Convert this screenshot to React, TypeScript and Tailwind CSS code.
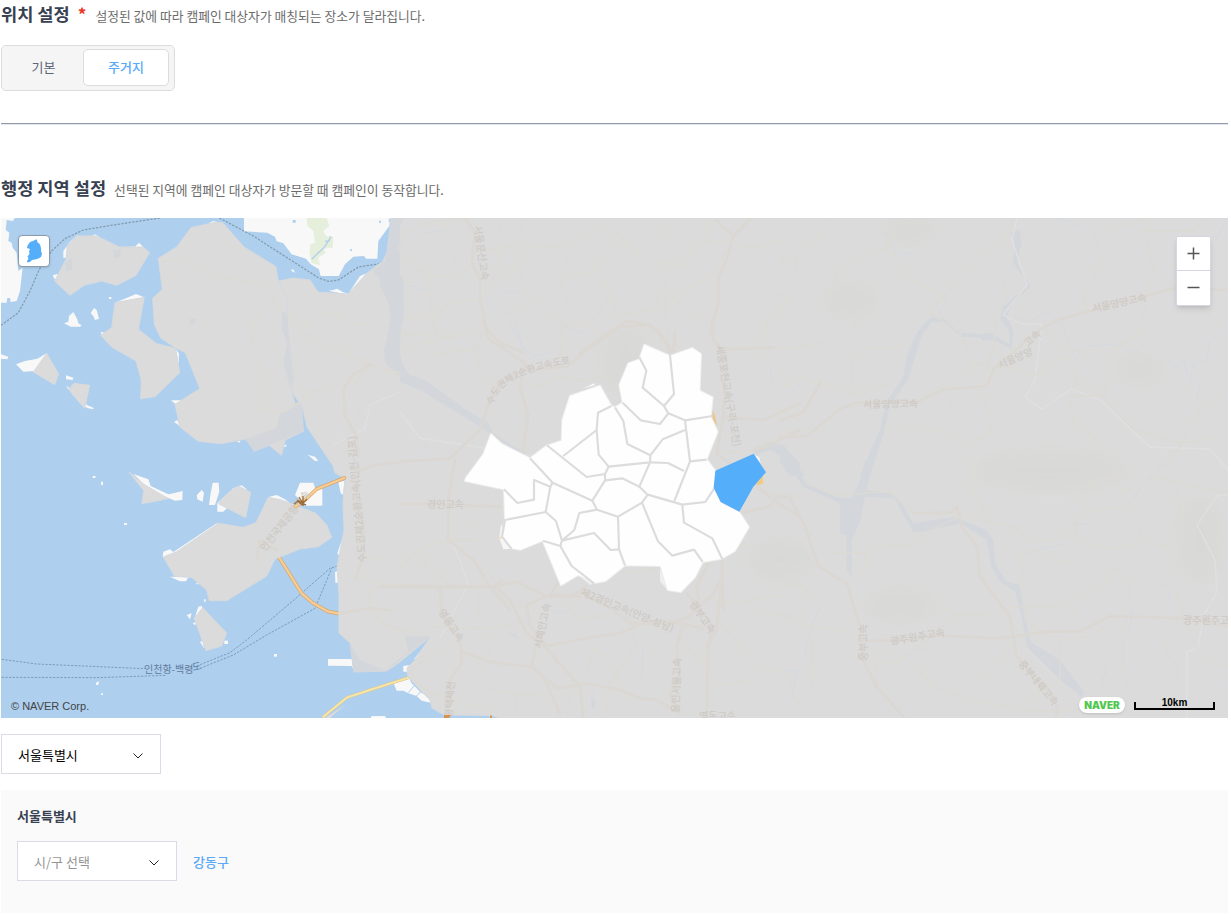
import type { ReactNode } from "react";

const FONT = "font-['Noto_Sans_CJK_KR','Noto_Sans',sans-serif]";

/** A map tile drawn at triple density, placed at x, y of the map. */
function Tile({ x, y, children }: { x: number; y: number; children: ReactNode }) {
  return <g transform={`translate(${x} ${y}) scale(0.33333)`}>{children}</g>;
}

function Lines({ d, color, width }: { d: string[]; color: string; width: number }) {
  return (
    <g fill="none" stroke={color} strokeWidth={width} strokeLinejoin="round" strokeLinecap="round">
      {d.map((p) => (
        <path key={p} d={p} />
      ))}
    </g>
  );
}

const MAINLAND =
  "M390 218L392 226 391 243 383 261 367 273 348 294 318 292 310 280 293 278 279 281 287 297 288 305 282 331 288 340 285 363 293 376 292 393 302 406 307 427 333 466 335 473 345 478 343 503 344 530 337 567 339 593 339 633 350 643 354 672 387 671 400 662 430 637 415 660 407 668 408 677 430 700 432 708 444 715 492 715.500 500 718H1228V218Z";

const ISLANDS_NORTH = [
  "232,60 290,60 358,93 430,93 449,110 408,178 350,208 306,195 252,208 210,238 164,195 198,130 202,88",
  "475,127 530,93 573,35 640,20 668,20 732,93 828,152 835,197 862,242 862,268 847,345 865,372 855,440 880,480 875,530 912,645 856,672 844,718 808,688 762,706 745,667 665,683 595,676 540,633 525,565 600,518 556,410 526,395 482,366 463,325 458,247 487,220",
  "345,260 433,244 415,340 470,383 527,397 539,470 465,542 422,548 424,492 408,435 335,393 302,358 335,335",
  "140,412 176,474 164,506 100,468",
  "222,502 269,508 254,577 206,520",
];

const ISLANDS_SOUTH = [
  "387,36 430,72 505,116 426,131 431,92",
  "715,78 752,97 737,173 655,131 685,98",
  "805,112 845,120 948,160 980,195 995,232 955,260 900,267 825,297 800,348 680,422 628,422 620,390 575,352 524,349 490,291 530,275 655,190 730,202 768,188",
  "608,443 680,519 665,558 618,572 583,475",
];

const WHITE_NORTH = [
  "3,6 45,6 38,15 20,12 17,42 28,50 25,75 35,80 38,95 50,110 55,165 68,155 60,225 50,255 32,258 30,246 22,246 20,260 3,260",
  "732,6 1170,6 1168,30 1135,75 1132,128 1098,128 1092,120 1060,122 1035,145 1016,180 962,180 957,160 932,145 918,128 875,115 850,82 830,76 825,62 802,50 732,46",
  "192,322 205,317 207,300 220,288 232,310 235,322 245,328 240,332 212,332",
  "272,292 282,276 290,282 297,308 285,312 280,300",
  "198,478 220,485 218,492 198,490",
  "48,445 75,435 112,428 142,410 108,465 70,467",
  "3,415 25,422 22,430 3,428",
  "198,508 210,518 262,568 280,575 280,580 265,577 245,568 205,520",
  "513,553 542,553 535,562 525,563",
  "522,618 532,612 540,630",
  "358,93 405,92 417,80 430,93",
  "345,260 408,234 433,244",
  "202,85 232,58 240,62",
  "275,60 285,55 300,64",
  "158,178 172,174 178,185 164,190",
  "528,400 537,412 536,440 530,438",
  "985,224 1000,222 1012,218 1028,228 1045,233 1080,180 1100,172 1050,238",
  "923,716 945,722 953,732 945,735",
  "190,105 200,90 203,125 190,125",
  "872,162 880,160 885,170 878,167",
  "302,348 318,350 306,360",
  "327,243 334,243 334,249 327,249",
  "850,688 860,686 857,694",
  "710,675 722,675 718,680",
  "625,22 640,15 660,20",
  "852,244 860,240 860,265",
  "422,485 426,485 425,505",
];

const WHITE_SOUTH = [
  "400,42 445,58 452,78 505,103 520,100 548,93 547,120 525,122 505,114 450,90",
  "278,48 287,48 286,54 278,54",
  "303,65 309,65 309,75 303,75",
  "372,189 381,189 381,195 372,195",
  "590,106 605,90 612,98 608,125 592,118",
  "638,68 656,68 658,95 645,135 627,135 632,100",
  "652,130 700,85 725,76 740,88 670,155 652,155",
  "885,105 900,68 940,68 945,84 967,85 967,137 920,137",
  "803,112 830,105 855,118 870,130",
  "488,290 490,275 510,268 520,276 650,190 655,196 500,300",
  "510,350 565,352 558,364 540,364",
  "588,370 594,368 594,374",
  "612,418 617,418 617,425 612,425",
  "595,440 606,438 608,450 590,470 582,480",
  "560,465 575,460 570,478",
  "578,490 590,485 585,496",
  "600,545 608,542 612,565",
  "673,542 684,542 684,552 673,552",
  "822,582 831,582 831,590 822,590",
  "984,597 1055,597 1060,628 1055,618 984,617",
  "288,668 297,663 295,675 288,675",
  "303,700 309,700 309,705 303,705",
  "1015,66 1033,62 1030,105 1022,100",
  "1012,280 1022,250 1028,230 1020,290",
  "1005,336 1013,332 1014,368 1006,368",
  "1115,768 1155,768 1160,778 1110,778",
  "943,0 955,0 950,4",
];

const SEOUL =
  "733,74 810,108 877,84 903,102 899,212 938,232 932,290 953,335 920,418 946,452 941,505 962,548 1018,577 1047,621 1005,693 965,716 908,726 885,772 842,816 803,810 782,738 675,736 617,783 583,789 535,765 483,796 428,662 362,689 335,685 305,650 315,600 312,508 195,483 197,475 250,403 273,342 305,372 390,415 440,377 485,362 487,300 510,228 600,197 634,258 645,262 668,248 658,195 685,130 718,118";

const DISTRICTS = [
  "M718 112L739 152 728 203 792 258 822 222 810 105",
  "M792 258L805 280 855 301 938 288",
  "M668 248L722 301 780 312 805 280",
  "M645 262L670 303 682 372 751 406 788 358 855 330",
  "M634 258L594 278 590 330 596 404 626 440 750 427 751 406",
  "M440 375L560 471 615 462 626 440",
  "M590 330L490 408",
  "M855 301L870 424 920 419",
  "M870 424L823 543",
  "M750 427L804 429 852 453",
  "M750 427L718 500 743 524 847 554 916 546 943 505",
  "M718 500L667 475 615 481 615 462",
  "M615 481L577 542 591 569 654 590 726 548 743 524",
  "M390 415L458 488 577 542",
  "M312 508L352 549 402 539 402 480 451 500 458 488",
  "M451 500L437 576 315 600 306 650 335 687",
  "M437 576L468 603 486 662 481 678 428 662",
  "M591 569L538 579 523 630 486 662 582 639 632 690 657 688",
  "M654 590L657 688 675 736",
  "M481 678L515 738 583 791",
  "M726 548L774 664 817 707 882 689 908 726",
  "M847 554L852 608 937 655 967 718",
];

const WATER_BLOBS: { x: number; y: number; shapes: string[] }[] = [
  {
    x: 0,
    y: 216,
    shapes: [
      "1172,10 1200,6 1200,480 1155,440 1152,400 1160,370 1172,300 1160,220 1120,165 1155,135",
      "735,670 830,635 840,590 905,560 912,645 850,670 808,688 762,706",
      "845,290 862,285 868,372 880,480 872,520 850,440 862,380 845,340",
      "195,140 215,125 218,160 200,165",
      "340,105 365,98 358,125 342,125",
      "566,310 590,308 576,330",
    ],
  },
  {
    x: 380,
    y: 216,
    shapes: ["38,6 70,10 55,40 48,160 70,190 72,300 62,345 60,420 18,420 30,330 30,270 0,210 0,145 25,130"],
  },
  {
    x: 400,
    y: 320,
    shapes: [
      "0,100 0,185 60,210 240,320 350,395 390,415 400,410 350,385 280,340 265,310 200,270 75,180 30,165 8,135",
      "1060,385 1100,365 1150,375 1200,430 1200,480 1150,415 1110,390 1065,405",
    ],
  },
  {
    x: 780,
    y: 216,
    shapes: [
      "240,780 300,640 318,560 370,480 380,420 410,350 450,305 490,305 540,350 600,355 630,350 690,385 685,340 660,310 670,270 745,210 700,140 705,80 690,50 720,40 725,80 712,140 752,212 700,260 680,300 700,345 695,400 640,372 610,375 600,365 545,362 490,318 455,318 425,360 385,490 330,570 312,650 270,780",
      "0,690 30,720 75,780 30,780 0,740",
    ],
  },
  {
    x: 780,
    y: 460,
    shapes: [
      "12,0 45,0 75,65 165,110 215,115 240,60 255,0 280,0 260,90 330,100 360,120 400,190 520,170 620,210 640,240 645,310 680,365 720,375 735,470 752,545 840,600 915,700 905,712 835,655 740,560 725,470 705,395 660,365 635,325 620,240 540,190 430,215 400,215 370,165 345,115 255,110 240,185 215,240 215,350 200,330 200,225 180,220 180,130 70,80",
    ],
  },
  { x: 380, y: 580, shapes: ["10,275 85,215 75,170 150,168 20,272", "380,155 410,165 408,175", "635,350 648,370 640,385 632,375"] },
  { x: 0, y: 460, shapes: ["1062,636 1100,625 1160,634", "1050,550 1080,600 1150,628 1060,636"] },
];

const STREAMS: { x: number; y: number; d: string[] }[] = [
  {
    x: 400,
    y: 320,
    d: [
      "M325 0L375 90 400 110 450 95 490 60",
      "M60 360L80 375 70 395 90 400",
      "M480 0L495 20 560 40",
      "M170 60L260 100",
      "M420 190L440 210",
      "M1110 140L1120 200 1080 230",
      "M280 770L320 750 345 770",
      "M1080 760L1110 730",
    ],
  },
  {
    x: 780,
    y: 216,
    d: [
      "M270 15L330 70 350 110 400 115 430 150",
      "M840 6L900 30 945 55",
      "M490 220L500 260 475 290",
      "M700 300L740 320 800 290 845 320 860 370 890 430 920 390 1000 385 1060 410 1100 380 1130 410 1190 450 1210 430 1230 500 1240 440 1280 430 1290 370 1340 345",
      "M1340 5L1310 70",
      "M210 300L230 340",
      "M5 520L30 530 75 500",
      "M500 545L520 590",
      "M1260 500L1250 560 1200 600",
    ],
  },
  {
    x: 780,
    y: 460,
    d: [
      "M1160 10L1100 60 1050 130",
      "M660 330L730 280 860 250",
      "M885 230L890 190 930 190",
      "M80 600L75 560 100 480 130 430",
      "M700 690L740 640",
      "M1060 440L1050 500 1030 540 1030 610",
      "M0 640L50 630 40 700 0 730",
      "M380 610L405 570 435 565",
      "M1140 370L1180 385 1160 440",
      "M980 620L960 690",
      "M1340 655L1290 720",
    ],
  },
  {
    x: 380,
    y: 580,
    d: ["M520 100L575 90 600 110", "M790 200L785 300", "M640 310L640 350", "M760 160L770 200", "M300 110L320 120", "M410 340L405 390"],
  },
  { x: 380, y: 216, d: ["M320 255L400 300 430 400", "M75 210L105 210 110 220 150 220", "M80 20L130 50 210 40", "M1215 230L1160 260", "M360 230L390 225 420 235"] },
];

const MINOR: { x: number; y: number; d: string[] }[] = [
  {
    x: 0,
    y: 216,
    d: [
      "M480 135L540 130 640 180 700 190 780 200 810 230 830 275 870 295 890 320",
      "M790 260L775 300 750 330 765 350 750 400 785 460 785 580 850 588 905 555 920 530 985 520 1050 490",
      "M870 300L880 330 980 385 1060 425 1200 480",
      "M910 330L960 300 990 285 1050 320 1100 325",
      "M1025 350L1050 420 1110 450 1200 470",
      "M1065 500L1085 550 1075 600",
      "M1110 450L1060 500",
    ],
  },
  {
    x: 0,
    y: 460,
    d: [
      "M1060 30L1150 10 1200 5",
      "M1085 340L1130 370 1200 375",
      "M1100 295L1150 290 1200 310",
      "M1100 440L1160 500 1200 508",
      "M1105 440L1110 390 1130 370",
      "M1185 20L1185 260",
    ],
  },
  {
    x: 400,
    y: 320,
    d: [
      "M0 45L80 40 110 100 230 90 250 30",
      "M480 0L500 60 470 110 480 170 420 200 380 190",
      "M550 0L590 40 640 50",
      "M650 190L610 170 540 180 480 170",
      "M230 90L240 160 280 200 250 300",
      "M145 660L60 690 0 740",
      "M60 690L80 740 160 800",
      "M225 560L222 660 145 660",
      "M1090 250L1200 300",
      "M1050 440L1100 520 1200 530",
      "M950 400L1060 390 1150 340 1200 330",
      "M1000 690L1030 670 1100 700 1200 800",
      "M1100 0L1090 90 1050 130",
      "M300 770L310 840 420 870",
      "M550 750L700 760 780 740",
    ],
  },
  {
    x: 780,
    y: 216,
    d: [
      "M135 10L130 50 60 100 45 130 10 140 0 110",
      "M310 10L330 90 380 180 490 240 565 160 575 120 690 50 700 10",
      "M330 90L175 160 150 240 250 340 270 395 390 390",
      "M490 240L450 290 540 350 580 440 520 510",
      "M80 490L120 500 210 535 340 500",
      "M80 490L50 480 0 530",
      "M0 400L120 380 130 370",
      "M50 130L40 230 0 270",
      "M220 540L215 420 270 395",
      "M670 30L665 170 680 250 650 300 640 400 620 450",
      "M945 60L965 140 910 240 920 280",
      "M945 55L1090 10",
      "M1090 10L1120 160 1100 240 1080 350 1000 400 970 540 870 540 880 620 990 700 1020 780",
      "M1090 45L1240 45 1270 10",
      "M580 440L620 450 630 470",
      "M620 450L700 455 780 480 830 420 880 440 890 500 970 540",
      "M310 640L460 640 560 690 580 780",
      "M560 690L630 650 635 600 590 520",
      "M970 540L1060 640 1200 680 1340 660",
      "M1340 520L1260 580 1200 690 1150 760",
      "M800 340L820 380 900 410 940 400",
      "M1285 270L1290 300 1330 340",
    ],
  },
  {
    x: 780,
    y: 460,
    d: [
      "M75 70L170 105 330 95 400 160 530 160 640 190 700 200 750 245 840 235 880 190 930 150 1040 145 1085 180 1080 240 1160 260",
      "M160 280L255 280 300 260 400 255 430 220 560 160",
      "M415 260L430 345",
      "M255 280L265 310 235 350",
      "M485 430L530 465 650 460 700 440 830 440 900 400 980 370 1000 320",
      "M690 200L730 330 735 480 830 540 930 530 1000 480",
      "M700 290L770 270 860 310 885 300 885 190",
      "M1000 320L1050 360 1040 480 1020 540 1020 600 1045 700",
      "M0 380L60 375 100 410 60 470",
      "M0 460L60 490 180 510 240 550",
      "M270 600L340 615 440 540 530 460",
      "M265 560L400 610 460 680 570 720 700 740 840 660 840 540",
      "M980 0L1030 100 1120 50 1340 100",
      "M1120 50L1150 0",
      "M920 160L910 100 940 60 1010 50",
      "M1190 90L1200 160 1160 260 1200 440 1250 560 1280 600 1340 620",
      "M570 0L575 90 630 180",
      "M0 650L30 660 45 720 70 740 100 660 95 500",
      "M285 690L290 600",
      "M1195 480L1150 560 1190 620 1200 700",
      "M700 750L850 755 890 750",
      "M560 700L620 640 690 560",
      "M880 220L930 250 1000 270 1080 240",
      "M905 400L880 470 845 515",
      "M0 310L40 320 100 310",
    ],
  },
  {
    x: 380,
    y: 580,
    d: [
      "M300 0L295 110 335 190 320 240 290 310 350 335 450 345 520 330",
      "M160 140L330 145 420 130",
      "M545 50L600 120 700 100 780 130",
      "M640 205L610 300 570 330 560 414",
      "M640 205L680 235 720 320 750 350",
      "M0 115L40 145 150 165",
      "M1020 130L1080 190 1090 220 1150 260 1230 285",
      "M1000 320L1100 300 1150 260",
      "M980 140L890 180 980 250",
      "M1080 50L1150 100 1230 105",
      "M85 290L150 340 330 390 330 414",
      "M85 280L170 210 240 185",
      "M760 160L750 220 690 310 680 400",
      "M980 55L1060 70 1230 40",
    ],
  },
  {
    x: 380,
    y: 216,
    d: [
      "M60 130L150 180 240 185 275 140",
      "M55 110L70 50 130 20 260 6",
      "M130 70L150 180 155 300 170 360 230 360",
      "M75 310L155 300 220 260 320 250",
      "M235 185L215 90 190 30",
      "M310 105L410 90 430 10",
      "M410 80L520 95 580 80 680 35 720 60 775 120",
      "M580 80L560 140 540 190 565 250 540 330 545 420",
      "M545 175L600 180 655 155 650 140 710 80 860 145 945 145",
      "M860 20L855 290 865 370",
      "M655 155L690 235 710 300 820 280 845 225",
      "M690 235L640 310 620 325 545 330",
      "M410 90L410 150 450 240 530 320",
      "M410 150L320 220",
      "M980 10L980 75 1060 80 1120 95 1210 70",
      "M880 245L1010 170 1040 100",
      "M880 245L980 330",
      "M910 145L945 90 980 75",
      "M60 410L120 385 230 360 300 345",
      "M1230 250L1190 300 1120 370 1110 410",
      "M450 240L410 290",
      "M360 10L355 130 340 190",
    ],
  },
];

const MAJOR: { x: number; y: number; d: string[] }[] = [
  { x: 0, y: 216, d: ["M1110 445L1060 475 1030 520 1035 600 1070 660 1075 720", "M1070 768L1130 745 1200 738"] },
  { x: 0, y: 460, d: ["M1075 20L1070 110 1090 190 1090 290 1065 360", "M1018 460L1110 445 1170 450", "M770 300L778 245 830 270"] },
  {
    x: 400,
    y: 320,
    d: [
      "M250 0L265 55 375 130 360 200 385 290 370 380 370 410",
      "M270 240L300 190 370 150 500 140 560 90 660 20 750 15 800 70 810 105",
      "M0 425L150 415 240 330 270 240",
      "M0 552L85 552 300 560",
      "M165 420L145 540 145 660 220 720 270 800 330 870",
      "M0 797L100 800 280 800 350 785 440 830 540 830",
      "M935 0L940 60 980 110 970 290 950 400 1000 440 1070 500 1120 540 1200 590",
      "M970 290L1090 300 1200 250",
      "M1200 330L1100 380 1060 390",
      "M1018 580L1110 560 1130 530",
      "M965 716L970 870",
      "M925 730L890 800 900 870",
    ],
  },
  {
    x: 780,
    y: 216,
    d: [
      "M0 665L80 660 180 580 230 560 410 560 490 520 620 510 640 460 780 340 840 310 950 280 1190 215",
      "M1290 220L1343 222",
      "M0 612L70 590 120 500",
    ],
  },
  {
    x: 780,
    y: 460,
    d: [
      "M0 110L30 115 75 200 115 320 200 370 240 500 250 600 290 680 370 770",
      "M250 543L400 540 450 525 650 535 700 530 800 515 900 515 990 468 1220 475 1343 500",
      "M400 160L510 158 530 140 545 200 590 260 600 350 690 470 710 590 830 720 830 770",
    ],
  },
  {
    x: 380,
    y: 580,
    d: [
      "M0 20L180 22 340 20 365 0",
      "M180 30L185 100 240 180 245 250 210 300 205 414",
      "M245 215L330 245 460 262 490 290 540 400",
      "M345 20L390 60 440 160 490 195 600 320 610 414",
      "M440 75L510 45 540 0",
      "M440 75L450 140 500 195",
      "M470 190L455 260 530 325 630 310 720 330 780 355 830 360 890 395",
      "M490 200L650 170 720 160 800 125 900 130 970 145",
      "M600 35L700 90 750 130 850 130 920 115 1000 40 1020 0",
      "M910 130L890 200 900 280 870 340 900 400",
      "M920 40L1000 140 985 200 980 414",
      "M1025 0L1010 150 980 200",
      "M510 45L580 45 620 20",
    ],
  },
  {
    x: 380,
    y: 216,
    d: [
      "M255 6L285 50 275 140 300 190 300 250 320 340 360 380 430 410",
      "M600 410L680 355 740 315 800 325 840 350 880 410 885 350",
      "M1110 10L1060 60 1040 130 1015 190 1015 260 990 350 1020 400 1180 395",
      "M1060 60L1010 15",
    ],
  },
];

type Label = { t: string; x: number; y: number; r: number };
const ROAD_LABELS: Label[] = [
  { t: "경인고속", x: 427, y: 508, r: 0 },
  { t: "서울양양고속", x: 863, y: 408, r: -1 },
  { t: "서울양양", x: 1000, y: 369, r: -24 },
  { t: "고속", x: 1028, y: 347, r: -42 },
  { t: "서울양양고속", x: 1093, y: 312, r: -12 },
  { t: "광주원주고속", x: 891, y: 645, r: -10 },
  { t: "광주원주고속", x: 1183, y: 624, r: 0 },
  { t: "중부내륙고속", x: 1018, y: 664, r: 50 },
  { t: "제2경인고속(안양-성남)", x: 580, y: 595, r: 22 },
  { t: "경부고속", x: 689, y: 604, r: 55 },
  { t: "세종포천고속(구리-포천)", x: 716, y: 346, r: 80 },
  { t: "영동고속", x: 438, y: 612, r: 56 },
  { t: "평택제천", x: 452, y: 718, r: -86 },
  { t: "서울문산고속", x: 474, y: 226, r: 82 },
  { t: "서해안고속", x: 541, y: 649, r: -78 },
  { t: "용인서울고속", x: 679, y: 713, r: -88 },
  { t: "중부고속", x: 867, y: 661, r: -90 },
  { t: "영동고속", x: 699, y: 720, r: 0 },
  { t: "수도권제2순환고속(인천-김포)", x: 366, y: 562, r: -95 },
  { t: "인천국제공항고속", x: 265, y: 552, r: -52 },
];

const WHITE_PATHS = [
  "M400 412L420 438 560 460 640 475",
  "M440 638L468 585 460 560 450 540",
  "M1017 218L1012 240 1027 285 1003 315 1022 324 1042 324 1035 380 1025 397 1042 409 1071 389 1100 400 1150 447 1210 449 1228 470",
  "M1228 494L1217 496 1197 525 1215 560 1217 592 1204 615 1198 647 1187 652 1187 718",
  "M334 445L365 428 370 405 400 392",
];

function MapDrawing() {
  return (
    <svg className="block h-full w-full" viewBox="1 218 1227 500" preserveAspectRatio="none">
      <defs>
        <filter id="soft" x="-30%" y="-30%" width="160%" height="160%">
          <feGaussianBlur stdDeviation="7" />
        </filter>
        <path id="ring" d="M493 405Q500 372 575 363" />
      </defs>
      <rect x="1" y="218" width="1227" height="500" fill="#aecfee" />
      <Tile x={0} y={216}>
        <g fill="#f8f8f8">
          {WHITE_NORTH.map((p) => (
            <polygon key={p} points={p} />
          ))}
        </g>
        <path
          d="M920 6L980 6 988 30 970 45 978 60 1000 62 998 95 970 98 978 110 955 125 960 148 935 142 928 110 932 85 945 80 940 45 922 30Z"
          fill="#e5efdc"
        />
        <path d="M935 130L955 110 972 95 985 75 993 62M975 76L990 74" fill="none" stroke="#aecfee" strokeWidth="4" />
        <path d="M1165 10l8 0 -4 10zM878 12h9v8h-9zM1137 14h6v6h-6zM1050 100h6v5h-6z" fill="#aecfee" />
        <path
          d="M3 328L55 290 90 225 118 160 155 105 195 68 250 42 340 27 480 6M658 6L760 60 900 150 955 185 985 196 1015 192 1075 153 1140 143 1155 130 1170 80 1175 10"
          fill="none"
          stroke="#859bae"
          strokeWidth="3.8"
          strokeDasharray="7 4"
        />
        <path d="M884 570L898 559" stroke="#fbe08a" strokeWidth="6" />
      </Tile>
      <Tile x={0} y={460}>
        <g fill="#f8f8f8">
          {WHITE_SOUTH.map((p) => (
            <polygon key={p} points={p} />
          ))}
        </g>
        <path
          d="M5 598L110 612 250 618 435 626M5 652L290 653 500 646M590 618L690 578 740 540 870 430 990 325 1020 316M600 625L700 585 800 525 945 445 995 325"
          fill="none"
          stroke="#7c9cbd"
          strokeWidth="3"
          strokeDasharray="7 4"
        />
        <Lines d={["M836 290L905 400 940 430 985 455 1018 461"]} color="#d9a566" width={11} />
        <Lines d={["M836 290L905 400 940 430 985 455 1018 461"]} color="#f6cd96" width={7} />
      </Tile>
      <Tile x={380} y={580}>
        <path
          d="M40 308L85 292 95 310 120 335 150 355 152 368 125 362 110 348 85 340 70 332 50 332ZM70 258L90 255 88 275 70 275ZM100 240L155 170 120 225Z"
          fill="#f8f8f8"
        />
        <path d="M85 338L102 318M108 350L122 335" stroke="#aecfee" strokeWidth="3" />
      </Tile>
      <Tile x={0} y={460}>
        <Lines d={["M970 770L1042 712 1120 687 1222 654"]} color="#dccb95" width={9} />
        <Lines d={["M970 770L1042 712 1120 687 1222 654"]} color="#fbe6a6" width={5.5} />
        <path d="M975 774L1042 730 1035 735 990 774Z" fill="#dbdbdb" />
      </Tile>

      {/* Regions outside the selected city */}
      <path d={MAINLAND} fill="#dbdbdb" stroke="#d6dade" strokeWidth="1" />
      <Tile x={0} y={216}>
        <g fill="#dbdbdb" stroke="#d7dadd" strokeWidth="3">
          {ISLANDS_NORTH.map((p) => (
            <polygon key={p} points={p} />
          ))}
        </g>
      </Tile>
      <Tile x={0} y={460}>
        <g fill="#dbdbdb" stroke="#d7dadd" strokeWidth="3">
          {ISLANDS_SOUTH.map((p) => (
            <polygon key={p} points={p} />
          ))}
        </g>
        <Lines d={["M885 140L915 120 950 87 1033 54"]} color="#d9a566" width={11} />
        <Lines d={["M885 140L915 120 950 87 1033 54"]} color="#f6cd96" width={7} />
      </Tile>

      {/* Terrain, water and roads that show through the veil */}
      <g fill="#d8d9d5" opacity="0.7" filter="url(#soft)">
        <ellipse cx="625" cy="360" rx="24" ry="34" />
        <ellipse cx="1050" cy="470" rx="75" ry="20" />
        <ellipse cx="850" cy="300" rx="26" ry="18" />
        <ellipse cx="1200" cy="540" rx="22" ry="40" />
        <ellipse cx="780" cy="560" rx="30" ry="20" />
        <ellipse cx="900" cy="605" rx="34" ry="16" />
        <ellipse cx="910" cy="230" rx="24" ry="12" />
        <ellipse cx="1140" cy="370" rx="22" ry="14" />
      </g>
      {WATER_BLOBS.map((b) => (
        <Tile key={`${b.x}-${b.y}`} x={b.x} y={b.y}>
          <g fill="#d3d7dc">
            {b.shapes.map((p) => (
              <polygon key={p} points={p} />
            ))}
          </g>
        </Tile>
      ))}
      {STREAMS.map((b) => (
        <Tile key={`${b.x}-${b.y}`} x={b.x} y={b.y}>
          <Lines d={b.d} color="#d4d9e0" width={3} />
        </Tile>
      ))}
      <Lines d={WHITE_PATHS} color="#e0e0e0" width={1.3} />
      {MINOR.map((b) => (
        <Tile key={`${b.x}-${b.y}`} x={b.x} y={b.y}>
          <Lines d={b.d} color="#dcdad4" width={4.5} />
        </Tile>
      ))}
      {MAJOR.map((b) => (
        <Tile key={`${b.x}-${b.y}`} x={b.x} y={b.y}>
          <Lines d={b.d} color="#dbd7d2" width={8} />
        </Tile>
      ))}
      <g fontSize="10" fontWeight="500" fill="#cecac5">
        {ROAD_LABELS.map((l) => (
          <text key={`${l.t}-${l.x}`} transform={`translate(${l.x} ${l.y}) rotate(${l.r})`}>
            {l.t}
          </text>
        ))}
        <text fontSize="9.5">
          <textPath href="#ring">수도권제2순환고속도로</textPath>
        </text>
      </g>
      <path d="M294 504l4 -3 3 3M297 500l9 5M301 505l6 -6M299 497l5 8M303 496v10" fill="none" stroke="#9a6a35" strokeWidth="1.3" />
      <text x="144" y="673" fontSize="10" fill="#5f7c9c">
        인천항-백령
      </text>
      <text transform="translate(193 671) rotate(-12)" fontSize="10" fill="#5f7c9c">
        도
      </text>

      {/* Seoul and its districts */}
      <Tile x={400} y={320}>
        <path d="M938 272L944 285 952 318 936 300Z" fill="#efc48c" />
        <path d="M1068 492L1088 468 1090 490 1075 496Z" fill="#f0cb84" />
        <path d="M1062 404L1078 412 1082 430ZM550 205L582 190 586 196ZM303 612L298 655 310 687 335 687Z" fill="#f6f6f6" />
        <path d="M485 795L535 762" stroke="#d9b078" strokeWidth="4" />
        <path d="M780 745L780 785 803 810ZM535 765L570 795 583 789Z" fill="#eeeeee" />
        <polygon points={SEOUL} fill="#fefefe" stroke="#eeeeee" strokeWidth="6" strokeLinejoin="round" />
        <polygon points={SEOUL} fill="#fefefe" />
        <path d="M298 650l8 3 -5 5z" fill="#f5d77a" />
        <g fill="none" stroke="#dcdcdc" strokeWidth="6.5" strokeLinejoin="round">
          {DISTRICTS.map((d) => (
            <path key={d} d={d} />
          ))}
        </g>
        <polygon points="946,452 1061,401 1098,457 1060,500 1018,575 962,546 941,503" fill="#55aefa" />
      </Tile>
      <path d="M444 715h7l-2 3h-5zM490 715.500h2v2.500h-2z" fill="#d8914e" />
    </svg>
  );
}

function ChevronDown() {
  return (
    <svg className="mt-[3px] h-3 w-3" viewBox="0 0 12 12" fill="none" stroke="#222" strokeWidth="1">
      <path d="M1.500 3.500L6 8 10.500 3.500" />
    </svg>
  );
}

function SelectBox({ text, tone }: { text: string; tone: string }) {
  return (
    <button
      className={`flex h-10 w-40 items-center justify-between border border-[#d9dce6] bg-white pr-4 pl-4 text-[13px] ${tone}`}
    >
      <span className="mt-px">{text}</span>
      <ChevronDown />
    </button>
  );
}

export default function App() {
  return (
    <div className={`h-[924px] w-full overflow-hidden bg-white pr-[3px] pl-px ${FONT}`}>
      <header className="flex h-7 items-center whitespace-nowrap">
        <h1 className="pb-px text-[17.600px] leading-7 font-bold text-[#374151]">위치 설정</h1>
        <span className="ml-2 text-[17px] leading-7 font-bold text-[#ee3524]">*</span>
        <p className="mt-1 ml-[9px] text-[12.800px] leading-5 text-[#6b6b6b]">설정된 값에 따라 캠페인 대상자가 매칭되는 장소가 달라집니다.</p>
      </header>

      <div className="mt-[17px] flex h-[46px] w-[174px] rounded-[5px] border border-[#dcdcdc] bg-[#f5f5f5] p-[3px] text-[13px]">
        <button className="h-full w-[78px] pr-px pb-0.5 text-[#5c6675]">기본</button>
        <button className="h-[37px] w-[86px] rounded-[5px] border border-[#dcdcdc] bg-white pb-0.5 font-medium text-[#5aa9f8]">주거지</button>
      </div>

      <hr className="mt-8 h-0.5 border-t border-b border-t-[#8e9bb0] border-b-[#e4e6ea]" />

      <header className="mt-[49px] flex h-7 items-center whitespace-nowrap">
        <h2 className="pb-px text-[17.600px] leading-7 font-bold text-[#374151]">행정 지역 설정</h2>
        <p className="mt-1 ml-2 text-[12.800px] leading-5 text-[#6b6b6b]">선택된 지역에 캠페인 대상자가 방문할 때 캠페인이 동작합니다.</p>
      </header>

      <section className="relative mt-4 h-[500px] overflow-hidden">
        <MapDrawing />
        <button className="absolute top-[17px] left-[17px] grid h-8 w-8 place-items-center rounded-[4px] border border-[#8a9bad] bg-white shadow-sm">
          <svg className="h-6 w-4" viewBox="0 0 16 24" fill="#55aefa">
            <path d="M10 0.500L11 0.500 11.300 3 14 5.500 15 9 15 12 16 15 15 18 12.500 19.500 9 20.500 6 21 4 23 1.500 23.500 1 22 2.500 19.500 1.500 17.500 3.500 15 3 12.500 4 10 1 9 1.500 6.500 4 3 5.500 2.500 7 2Z" />
          </svg>
        </button>
        <div className="absolute top-[18px] right-[17px] flex h-[70px] w-[35px] flex-col rounded-[2px] border border-[#d4d6e2] bg-white shadow-md">
          <button className="grid h-[34px] place-items-center border-b border-[#d4d6e2]">
            <svg className="h-[13px] w-[13px]" viewBox="0 0 13 13" stroke="#555" strokeWidth="1.500">
              <path d="M0.500 6.500H12.500M6.500 0.500V12.500" />
            </svg>
          </button>
          <button className="grid h-[33px] place-items-center">
            <svg className="h-[13px] w-[13px]" viewBox="0 0 13 13" stroke="#555" strokeWidth="1.500">
              <path d="M0.500 6.500H12.500" />
            </svg>
          </button>
        </div>
        <span className="absolute bottom-[4px] left-[10px] font-['Liberation_Sans',sans-serif] text-[11px] leading-4 text-[#444]">
          © NAVER Corp.
        </span>
        <div className="absolute right-[13px] bottom-[5px] flex items-end gap-[9px]">
          <span className="flex h-4 w-[46px] items-center justify-center rounded-full bg-white pt-px pb-0.5 font-['Inter',sans-serif] text-[10px] leading-3 font-black text-[#4ec74e] shadow-sm">
            NAVER
          </span>
          <span className="mb-[3px] flex h-[17px] w-[81px] flex-col items-center justify-end font-['Liberation_Sans',sans-serif] text-[10px] leading-none font-bold text-black">
            <span className="-mb-[6px]">10km</span>
            <span className="h-2 w-full border-2 border-t-0 border-black" />
          </span>
        </div>
      </section>

      <div className="mt-4">
        <SelectBox text="서울특별시" tone="text-black" />
      </div>

      <section className="mt-4 h-[123px] bg-[#fafafa] px-4 pt-4">
        <h3 className="h-[35px] text-[13px] leading-5 font-bold text-[#374151]">서울특별시</h3>
        <div className="flex items-center gap-4">
          <SelectBox text="시/구 선택" tone="text-[#949494]" />
          <span className="mt-px text-[13px] font-medium text-[#5aa9f8]">강동구</span>
        </div>
      </section>
    </div>
  );
}
